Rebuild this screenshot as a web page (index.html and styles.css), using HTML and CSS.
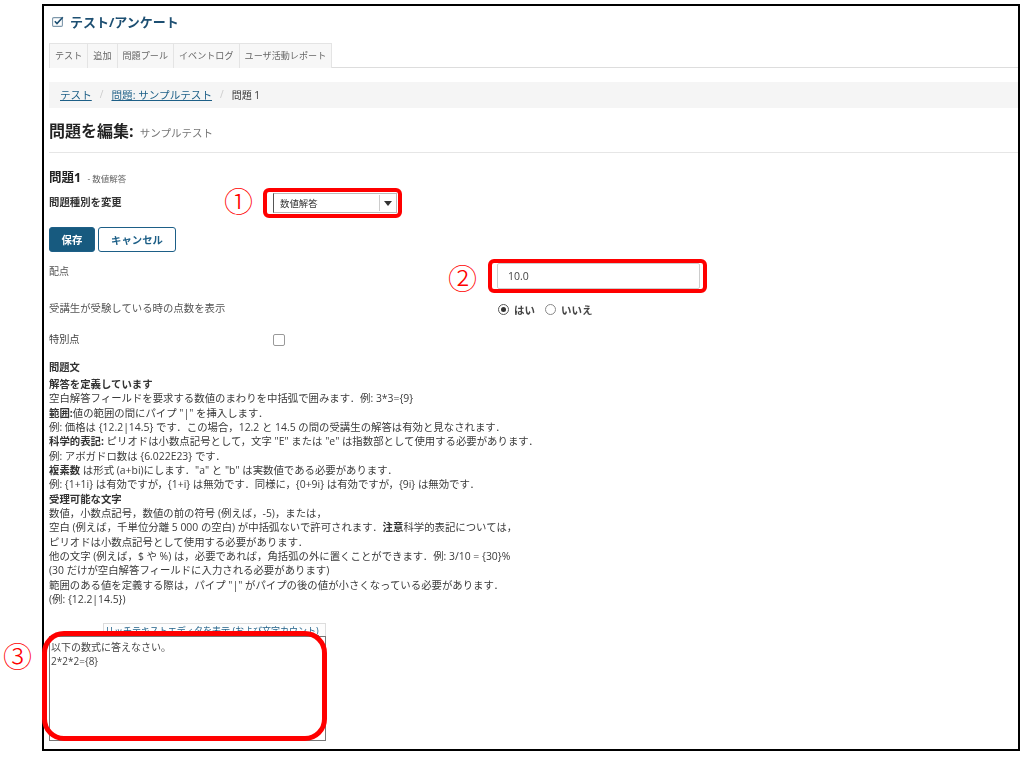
FILE: index.html
```html
<!DOCTYPE html>
<html lang="ja">
<head>
<meta charset="utf-8">
<title>問題を編集</title>
<link rel="stylesheet" href="styles.css">
</head>
<body>
<div class="frame">
  <div class="content">
    <header class="mod-title">
      <svg class="mod-icon" width="12" height="11" viewBox="0 0 12 11"><rect x="0.6" y="1.6" width="9.8" height="8.8" rx="1.2" fill="none" stroke="#7d97aa" stroke-width="1.1"/><path d="M2.8 5.2 L5 7.6 L10.8 1.2" fill="none" stroke="#1d4f72" stroke-width="1.6"/></svg>
      <span>テスト/アンケート</span>
    </header>
    <nav class="tabs">
      <a class="tab">テスト</a><a class="tab">追加</a><a class="tab">問題プール</a><a class="tab">イベントログ</a><a class="tab">ユーザ活動レポート</a>
    </nav>
    <div class="crumbs">
      <a class="link">テスト</a><span class="sep">/</span><a class="link">問題: サンプルテスト</a><span class="sep">/</span><span>問題 1</span>
    </div>
    <h1 class="page-title">問題を編集: <small>サンプルテスト</small></h1>
    <div class="q-head"><strong>問題1</strong> <small>- 数値解答</small></div>
    <div class="row type-row">
      <label class="lab strong">問題種別を変更</label>
      <div class="select"><span class="select-text">数値解答</span><span class="select-arrow"></span></div>
    </div>
    <div class="buttons"><button class="btn primary">保存</button><button class="btn">キャンセル</button></div>
    <div class="plain points-label">配点</div>
    <div class="points-input">10.0</div>
    <div class="row show-row">
      <label class="lab wide">受講生が受験している時の点数を表示</label>
      <div class="radios">
        <span class="radio on"></span><span class="radio-label">はい</span>
        <span class="radio"></span><span class="radio-label">いいえ</span>
      </div>
    </div>
    <div class="row extra-row">
      <label class="lab">特別点</label>
      <span class="check"></span>
    </div>
    <div class="qtext-title">問題文</div>
    <div class="help">
      <div class="help-h">解答を定義しています</div>
      <div>空白解答フィールドを要求する数値のまわりを中括弧で囲みます．例: 3*3={9}</div>
      <div><b>範囲:</b>値の範囲の間にパイプ "|" を挿入します．</div>
      <div>例: 価格は {12.2|14.5} です．この場合，12.2 と 14.5 の間の受講生の解答は有効と見なされます．</div>
      <div><b>科学的表記:</b> ピリオドは小数点記号として，文字 "E" または "e" は指数部として使用する必要があります．</div>
      <div>例: アボガドロ数は {6.022E23} です．</div>
      <div><b>複素数</b> は形式 (a+bi)にします．"a" と "b" は実数値である必要があります．</div>
      <div>例: {1+1i} は有効ですが，{1+i} は無効です．同様に，{0+9i} は有効ですが，{9i} は無効です．</div>
      <div class="help-h">受理可能な文字</div>
      <div>数値，小数点記号，数値の前の符号 (例えば，-5)，または，</div>
      <div>空白 (例えば，千単位分離 5 000 の空白) が中括弧ないで許可されます．<b>注意</b>科学的表記については，</div>
      <div>ピリオドは小数点記号として使用する必要があります．</div>
      <div>他の文字 (例えば，$ や %) は，必要であれば，角括弧の外に置くことができます．例: 3/10 = {30}%</div>
      <div>(30 だけが空白解答フィールドに入力される必要があります)</div>
      <div>範囲のある値を定義する際は，パイプ "|" がパイプの後の値が小さくなっている必要があります．</div>
      <div>(例: {12.2|14.5})</div>
    </div>
    <div class="editor-wrap">
      <div class="editor-link"><a class="link">リッチテキストエディタを表示 (および文字カウント)</a></div>
      <div class="editor">以下の数式に答えなさい。<br>2*2*2={8}</div>
    </div>
  </div>

  <div class="mark m1"></div>
  <div class="mark m2"></div>
  <div class="mark m3"></div>
  <span class="num n1">①</span>
  <span class="num n2">②</span>
  <span class="num n3">③</span>
</div>
</body>
</html>
```
FILE: styles.css
```css
* { box-sizing: border-box; }
html, body { margin: 0; padding: 0; background: #fff; }
body {
  padding: 4px 0 0 42px;
  font-family: "Open Sans", "Noto Sans CJK JP", sans-serif;
  color: #333;
  font-size: 10px;
}
.frame {
  position: relative;
  width: 978px;
  height: 747px;
  border: 2px solid #000;
  padding: 0 0 0 5px;
}
.content { filter: blur(0.3px); }
.mod-title {
  display: flex;
  align-items: center;
  gap: 6px;
  height: 20px;
  padding-top: 5px;
  box-sizing: content-box;
  padding-left: 3px;
  color: #1d4f72;
  font-size: 13px;
  font-weight: 700;
}
.tabs {
  display: flex;
  margin-top: 12px;
  height: 25px;
  border-bottom: 1px solid #ddd;
}
.tab {
  height: 25px;
  line-height: 24px;
  padding: 0 5px;
  font-size: 9.1px;
  color: #666;
  background: #f7f7f7;
  border: 1px solid #e4e4e4;
  border-bottom: 0;
  margin-right: -1px;
}
.crumbs {
  display: flex;
  align-items: center;
  height: 26px;
  margin-top: 14px;
  padding: 0 0 2px 11px;
  background: #f5f5f5;
  font-size: 10px;
}
.link { color: #1d5f87; text-decoration: underline; }
.crumbs .link { font-size: 10.6px; }
.sep { color: #ccc; margin: 0 8px; }
.page-title {
  margin: 10px 0 0;
  height: 35px;
  line-height: 27px;
  font-size: 16px;
  font-weight: 700;
  color: #222;
  border-bottom: 1px solid #e6e6e6;
}
.page-title small { font-size: 10.5px; font-weight: 400; color: #777; margin-left: 2px; }
.q-head {
  margin-top: 16px;
  height: 18px;
  line-height: 18px;
  font-size: 12.5px;
  color: #222;
}
.q-head small { font-size: 8.5px; color: #666; margin-left: 3px; }
.row { display: flex; align-items: center; }
.lab { width: 224px; flex: none; font-size: 10.2px; color: #444; }
.lab.strong { font-size: 10.4px; font-weight: 700; color: #333; }
.type-row { height: 24px; margin-top: 2px; }
.select {
  display: flex;
  align-items: center;
  width: 124px;
  height: 20px;
  border: 1px solid #bbb;
  border-left-color: #555;
  font-size: 9.4px;
  margin-top: 4px;
}
.select-text { flex: 1; padding-left: 6px; }
.select-arrow {
  width: 17px;
  height: 16px;
  border-left: 1px solid #ccc;
  position: relative;
}
.select-arrow::after {
  content: "";
  position: absolute;
  left: 4px;
  top: 6px;
  border: 4px solid transparent;
  border-top: 5px solid #333;
  border-bottom: 0;
}
.buttons { display: flex; gap: 3px; margin-top: 14px; }
.btn {
  height: 25px;
  width: 78px;
  padding: 0;
  background: #fff;
  border: 1px solid #1d5f87;
  border-radius: 3px;
  color: #1d5f87;
  font: 700 10.4px "Noto Sans CJK JP", sans-serif;
}
.btn.primary { width: 46px; background: #175a7f; color: #fff; }
.plain { font-size: 10px; color: #555; }
.points-label { margin-top: 12px; height: 14px; line-height: 14px; }
.points-input {
  position: absolute;
  left: 448px;
  top: 257px;
  width: 203px;
  height: 26px;
  padding-left: 10px;
  border: 1px solid #ccc;
  border-radius: 2px;
  font: 10.5px/24px "Open Sans", sans-serif;
  color: #444;
}
.show-row { margin-top: 21px; height: 16px; }
.lab.wide { width: 449px; font-size: 10.4px; color: #555; }
.radios { display: flex; align-items: center; margin-top: 4px; font-size: 10.5px; font-weight: 700; color: #444; }
.radio {
  width: 11px;
  height: 11px;
  border: 1px solid #888;
  border-radius: 50%;
  position: relative;
}
.radio.on { border-color: #555; }
.radio.on::after {
  content: "";
  position: absolute;
  left: 2px;
  top: 2px;
  width: 5px;
  height: 5px;
  border-radius: 50%;
  background: #333;
}
.radio-label { margin: 0 10px 0 5px; }
.extra-row { margin-top: 15px; height: 16px; }
.check {
  width: 12px;
  height: 12px;
  margin-top: 4px;
  border: 1px solid #999;
  border-radius: 2px;
}
.qtext-title { margin-top: 14px; height: 14px; line-height: 14px; font-size: 10.3px; font-weight: 700; }
.help { margin-top: 3px; font-size: 10.4px; line-height: 14.35px; color: #3a3a3a; white-space: nowrap; }
.help b, .help-h { font-weight: 700; color: #333; }
.editor-wrap { margin: 16px 0 0 54px; width: 223px; }
.editor-link {
  height: 13px;
  line-height: 13px;
  font-size: 9px;
  padding-left: 1px;
  background: #fdfdfd;
  border: 1px solid #ddd;
  border-bottom: 0;
  white-space: nowrap;
}
.editor {
  margin-left: -54px;
  width: 277px;
  height: 105px;
  padding: 3px 1px;
  border: 1px solid #777;
  font-size: 10px;
  line-height: 14px;
  color: #444;
}
.mark { position: absolute; border: 4.5px solid #f00; }
.m1 { left: 219px; top: 182px; width: 139px; height: 30px; border-radius: 6px; }
.m2 { left: 444px; top: 253px; width: 219px; height: 34px; border-radius: 6px; }
.m3 { left: -2px; top: 625px; width: 285px; height: 110px; border-radius: 22px; border-width: 5px; }
.num { position: absolute; color: #f00; font-family: "Noto Sans CJK JP", sans-serif; font-weight: 300; font-size: 29px; line-height: 30px; }
.n1 { left: 180px; top: 179px; }
.n2 { left: 404px; top: 256px; }
.n3 { left: -41px; top: 634px; }
```
